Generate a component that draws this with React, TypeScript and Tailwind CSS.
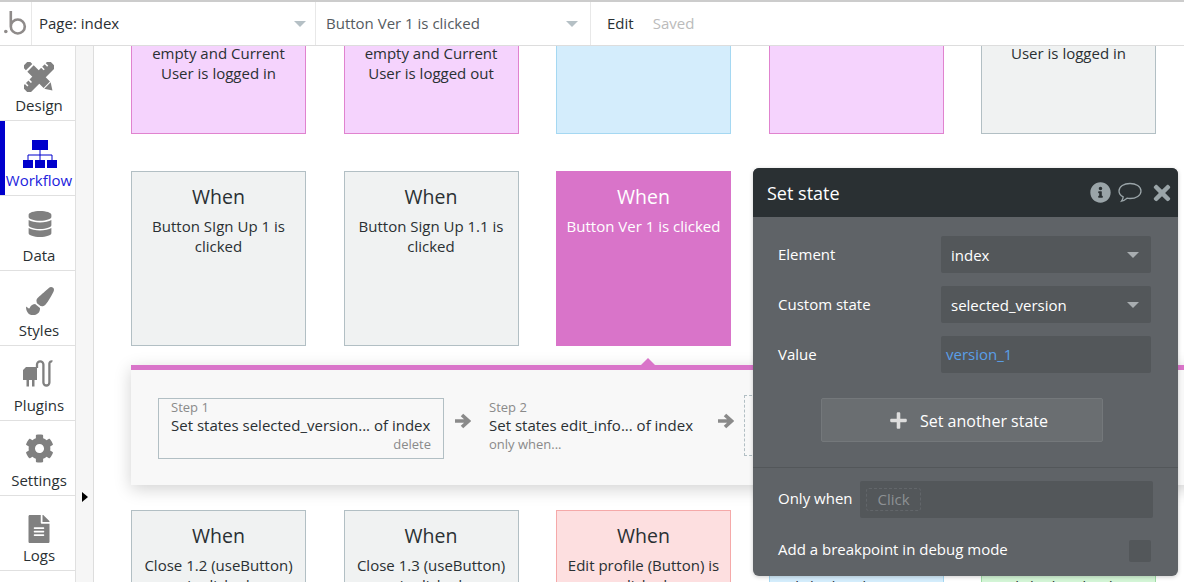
import React from "react";
import {
  FaCog,
  FaDatabase,
  FaFileAlt,
  FaInfoCircle,
  FaPaintBrush,
  FaPlus,
  FaTimes,
} from "react-icons/fa";

function Caret({ className }: { className: string }) {
  return (
    <svg width="12" height="6" viewBox="0 0 12 6" className={className}>
      <path d="M0 0h12L6 6z" fill="currentColor" />
    </svg>
  );
}

function DesignIcon() {
  return (
    <svg width="30" height="30" viewBox="0 0 30 30" className="mb-[1px] text-[#808080]">
      <g transform="rotate(-45 15 15)" fill="currentColor">
        <path d="M-4 10h38v10H-4zM0 10v3.5h1.6V10zM5 10v3.5h1.6V10zM23 10v3.5h1.6V10zM28 10v3.5h1.6V10z" fillRule="evenodd" />
      </g>
      <g transform="rotate(45 15 15)" fill="currentColor">
        <path d="M-4 10.5h5v9h-5zM3 10.5h23v9H3z" />
        <path d="M27 10.5l7 4.5-7 4.5z" />
      </g>
    </svg>
  );
}

function WorkflowIcon() {
  return (
    <svg width="34" height="28" viewBox="0 0 34 28" className="ml-[2px] text-[#0000cc]">
      <path d="M9 0h16v10H9zM0 20h10v8H0zM12 20h10v8H12zM24 20h10v8H24z" fill="currentColor" />
      <path d="M17 10v10M5 20v-5h24v5" fill="none" stroke="currentColor" strokeWidth="1" />
    </svg>
  );
}

function PluginIcon() {
  return (
    <svg width="30" height="27" viewBox="0 0 30 27" className="mb-[6px] -ml-[2px] text-[#808080]">
      <path d="M0 10 3 7h11v13h-2.5v6.5H9V20H6v6.5H3.500V20H0z" fill="currentColor" />
      <path d="M14 8V4.500a3.200 3.200 0 0 1 6.400 0v18a3 3 0 0 0 6 0V3.500a2.200 2.200 0 0 1 3-2" fill="none" stroke="currentColor" strokeWidth="2.300" />
    </svg>
  );
}

function BubbleIcon() {
  return (
    <svg width="24" height="21" viewBox="0 0 24 21" className="text-[#9aa4a8]">
      <path d="M12 1.500c6 0 11 3 11 7.500s-5 7.500-11 7.500c-1 0-2-.1-3-.3-1.500 1.300-3.300 2.600-5.500 3 .9-1.200 1.500-2.600 1.700-4.300C2.600 13.500 1 11.400 1 9c0-4.500 5-7.500 11-7.500z" fill="none" stroke="currentColor" strokeWidth="1.300" />
    </svg>
  );
}

function StepArrow() {
  return (
    <svg width="17" height="16" viewBox="0 0 17 16" className="mt-[15px] shrink-0 text-[#8a8a8a]">
      <path d="M1 8h13M8 2l6.500 6L8 14" fill="none" stroke="currentColor" strokeWidth="3.600" />
    </svg>
  );
}

function NavItem({ label, icon, active }: { label: string; icon: React.ReactNode; active?: boolean }) {
  return (
    <div
      className={`relative flex h-[75px] flex-col items-center border-b border-[#e0e0e0] pl-[3px] ${
        active ? "text-[#2222dd]" : "text-[#2a3033]"
      }`}
    >
      {active && <div className="absolute bottom-0 left-0 top-0 w-[5px] bg-[#0000cc]" />}
      <div className="flex h-[47px] items-end justify-center">{icon}</div>
      <div className="mt-[2px] text-[15px] leading-[20px]">{label}</div>
    </div>
  );
}

function Card({
  title,
  lines,
  tone,
  tall,
}: {
  title?: string;
  lines: string[];
  tone: string;
  tall?: boolean;
}) {
  return (
    <div className={`w-[175px] shrink-0 border text-center text-[#2a3033] ${tone} ${tall ? "h-[175px]" : "h-[88px] border-t-0"}`}>
      {title && <div className="mt-[11px] text-[19.5px] leading-[27px]">{title}</div>}
      <div className={title ? "mt-[6px] text-[15px] leading-[20px]" : "-mt-[3px] text-[15px] leading-[20px]"}>
        {lines.map((l, i) => (
          <div key={i}>{l}</div>
        ))}
      </div>
    </div>
  );
}

const gray = "border-[#b2bfc4] bg-[#f0f2f2]";
const pink = "border-[#e083cf] bg-[#f5d3fd]";
const blue = "border-[#a5d8f2] bg-[#d4edfc]";
const red = "border-[#f5a9a9] bg-[#fddfe0]";
const green = "border-[#9fdca5] bg-[#d3f5d6]";

function FieldRow({ label, value, link }: { label: string; value: string; link?: boolean }) {
  return (
    <div className="flex h-[37px] items-center justify-between">
      <div className="text-[15px] text-white">{label}</div>
      <div className="flex h-[37px] w-[210px] items-center justify-between rounded-[2px] bg-[#53575a] pr-[12px]">
        {link ? (
          <span className="pl-[5px] text-[15px] text-[#5a9fe8]">{value}</span>
        ) : (
          <>
            <span className="pl-[10px] pt-[2px] text-[15px] text-white">{value}</span>
            <Caret className="text-[#a8adb0]" />
          </>
        )}
      </div>
    </div>
  );
}

function Step({ n, text, note, selected }: { n: number; text: string; note: string; selected?: boolean }) {
  return (
    <div className={`h-[61px] border pl-[12px] pr-[12px] ${selected ? "w-[286px] border-[#b2bfc4]" : "-ml-[5px] w-[231px] border-transparent"}`}>
      <div className="text-[13px] leading-[16px] text-[#8a8a8a]">Step {n}</div>
      <div className="text-[15px] leading-[21px] whitespace-nowrap text-[#2a3033]">{text}</div>
      <div className={`text-[13px] leading-[16px] text-[#8a8a8a] ${selected ? "text-right" : ""}`}>{note}</div>
    </div>
  );
}

export default function App() {
  return (
    <div className="relative flex h-[582px] w-[1184px] flex-col overflow-hidden bg-white font-['Open_Sans',sans-serif]">
      <div className="flex h-[46px] shrink-0 border-b border-t-2 border-b-[#dddddd] border-t-[#cccccc]">
        <div className="flex w-[32px] items-center border-r border-[#e8e8e8]">
          <svg width="28" height="28" viewBox="0 0 28 28" className="ml-[3px] text-[#8f8b8a]">
            <circle cx="2.800" cy="21.500" r="1.800" fill="currentColor" />
            <path d="M7.800 1v15.500a7 7 0 1 0 14 0 7 7 0 1 0-14 0" fill="none" stroke="currentColor" strokeWidth="2.600" />
          </svg>
        </div>
        <div className="flex w-[284px] items-center justify-between border-r border-[#e8e8e8] pl-[7px] pr-[9px]">
          <span className="text-[15px] text-[#2a3033]">Page: index</span>
          <Caret className="text-[#b5c0c5]" />
        </div>
        <div className="flex w-[275px] items-center justify-between border-r border-[#e8e8e8] pl-[10px] pr-[12px]">
          <span className="text-[15px] text-[#555b5f]">Button Ver 1 is clicked</span>
          <Caret className="text-[#b5c0c5]" />
        </div>
        <div className="flex items-center pl-[16px] text-[15px]">
          <span className="text-[#2a3033]">Edit</span>
          <span className="ml-[19px] text-[#bbbbbb]">Saved</span>
        </div>
      </div>

      <div className="flex min-h-0 flex-1">
        <div className="w-[76px] shrink-0 border-r border-[#e0e0e0]">
          <NavItem label="Design" icon={<DesignIcon />} />
          <NavItem label="Workflow" active icon={<WorkflowIcon />} />
          <NavItem label="Data" icon={<FaDatabase size={26} className="mb-[6px] ml-[1px] text-[#808080]" />} />
          <NavItem label="Styles" icon={<FaPaintBrush size={28} className="mb-[3px] ml-[2px] text-[#808080]" />} />
          <NavItem label="Plugins" icon={<PluginIcon />} />
          <NavItem label="Settings" icon={<FaCog size={29} className="mb-[5px] text-[#808080]" />} />
          <NavItem label="Logs" icon={<FaFileAlt size={28} className="text-[#808080]" />} />
        </div>

        <div className="w-[18px] shrink-0 border-r border-[#dddddd] bg-[#f6f6f6] pl-[6px] pt-[446px]">
          <svg width="6" height="10" viewBox="0 0 6 10">
            <path d="M0 0l6 5-6 5z" fill="#000000" />
          </svg>
        </div>

        <div className="min-w-0 flex-1 overflow-hidden pl-[37px]">
          <div className="flex gap-[37.5px]">
            <Card tone={pink} lines={["empty and Current", "User is logged in"]} />
            <Card tone={pink} lines={["empty and Current", "User is logged out"]} />
            <Card tone={blue} lines={[]} />
            <Card tone={pink} lines={[]} />
            <Card tone={gray} lines={["User is logged in"]} />
          </div>

          <div className="mt-[37px] flex gap-[37.5px]">
            <Card tall tone={gray} title="When" lines={["Button SIgn Up 1 is", "clicked"]} />
            <Card tall tone={gray} title="When" lines={["Button Sign Up 1.1 is", "clicked"]} />
            <div className="h-[175px] w-[175px] shrink-0 border border-[#d974c9] bg-[#d974c9] text-center text-white">
              <div className="mt-[11px] text-[19.5px] leading-[27px]">When</div>
              <div className="mt-[6px] text-[15px] leading-[20px]">Button Ver 1 is clicked</div>
            </div>
          </div>

          <div className="relative mt-[19px] flex h-[120px] w-[1100px] items-start gap-[10px] border-t-[5px] border-[#d974c9] bg-[#f8f8f8] pl-[27px] pt-[28px] shadow-[0_4px_16px_rgba(0,0,0,0.18)]">
            <div className="absolute -top-[12px] left-[510px] h-0 w-0 border-x-[7px] border-b-[7px] border-x-transparent border-b-[#d974c9]" />
            <Step selected n={1} text="Set states selected_version... of index" note="delete" />
            <StepArrow />
            <Step n={2} text="Set states edit_info... of index" note="only when..." />
            <StepArrow />
            <div className="-mt-[3px] h-[61px] w-[150px] border border-dashed border-[#b2bfc4]" />
          </div>

          <div className="mt-[25px] flex gap-[37.5px]">
            <Card tall tone={gray} title="When" lines={["Close 1.2 (useButton)", "is clicked"]} />
            <Card tall tone={gray} title="When" lines={["Close 1.3 (useButton)", "is clicked"]} />
            <Card tall tone={red} title="When" lines={["Edit profile (Button) is", "clicked"]} />
            <Card tall tone={`${blue} pt-[68px]`} lines={["clicked and Current"]} />
            <Card tall tone={`${green} pt-[68px]`} lines={["clicked and Index"]} />
          </div>
        </div>
      </div>

      <div className="absolute left-[753px] top-[168px] flex h-[408px] w-[425px] flex-col overflow-hidden rounded-[6px] bg-[#5f6367] shadow-[0_1px_4px_rgba(0,0,0,0.2)]">
        <div className="flex h-[49px] shrink-0 items-center justify-between bg-[#2a3033] pl-[14px] pr-[4px]">
          <div className="pt-[1px] text-[18px] text-white">Set state</div>
          <div className="flex items-center text-[#9aa4a8]">
            <FaInfoCircle size={21} />
            <div className="ml-[7px] mr-[8px]">
              <BubbleIcon />
            </div>
            <FaTimes size={24} />
          </div>
        </div>
        <div className="flex flex-col gap-[13px] pl-[25px] pr-[27px] pt-[19px]">
          <FieldRow label="Element" value="index" />
          <FieldRow label="Custom state" value="selected_version" />
          <FieldRow label="Value" value="version_1" link />
        </div>
        <div className="ml-[68px] mt-[25px] flex h-[44px] w-[282px] shrink-0 items-center justify-center gap-[12px] rounded-[2px] border border-[#74787b] bg-[#6a6e71] pl-[13px] text-[16px] text-white">
          <FaPlus size={19} className="text-[#dddddd]" />
          <span className="pt-[1px]">Set another state</span>
        </div>
        <div className="mt-[25px] border-t border-[#53575a]" />
        <div className="mt-[13px] flex items-center pl-[25px] pr-[25px]">
          <div className="mb-[2px] w-[82px] text-[15px] text-white">Only when</div>
          <div className="flex h-[37px] flex-1 items-center rounded-[2px] bg-[#53575a] pl-[6px]">
            <div className="flex h-[23px] w-[55px] items-center justify-center rounded-[3px] border border-dashed border-[#62666a] text-[15px] text-[#8d9194]">
              Click
            </div>
          </div>
        </div>
        <div className="mt-[22px] flex items-start justify-between pl-[25px] pr-[27px]">
          <div className="-mt-[1px] text-[15px] leading-[20px] text-white">Add a breakpoint in debug mode</div>
          <div className="h-[22px] w-[22px] rounded-[2px] bg-[#53575a]" />
        </div>
      </div>
    </div>
  );
}
